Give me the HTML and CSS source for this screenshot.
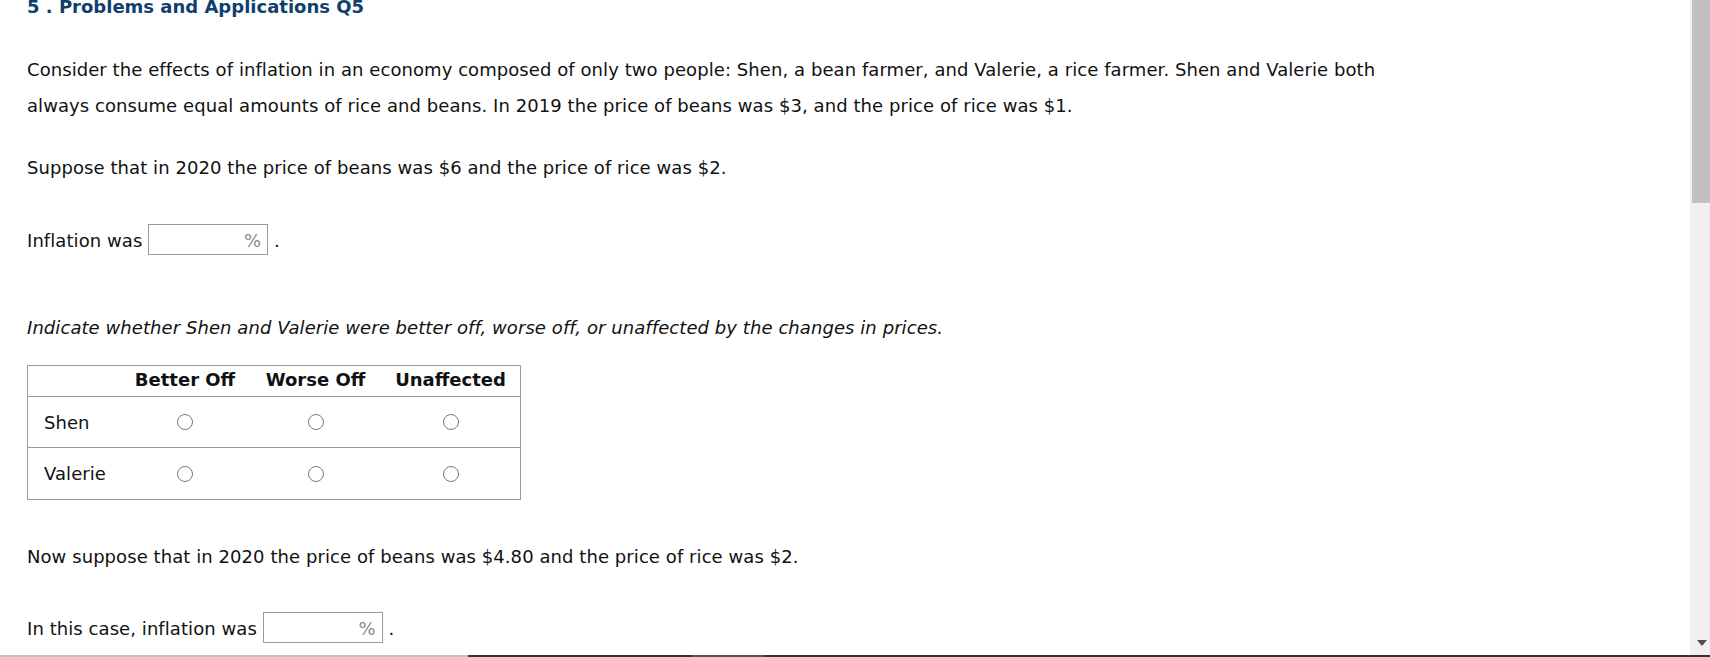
FILE: index.html
```html
<!DOCTYPE html>
<html lang="en">
<head>
<meta charset="utf-8">
<title>Problems and Applications Q5</title>
<link rel="stylesheet" href="styles.css">
</head>
<body>
<div class="frame">
  <div class="viewport">
    <main class="content">
      <h2 class="title">5 . Problems and Applications Q5</h2>
      <p class="para">Consider the effects of inflation in an economy composed of only two people: Shen, a bean farmer, and Valerie, a rice farmer. Shen and Valerie both always consume equal amounts of rice and beans. In 2019 the price of beans was $3, and the price of rice was $1.</p>
      <p class="para gap-a">Suppose that in 2020 the price of beans was $6 and the price of rice was $2.</p>
      <p class="para gap-b">Inflation was <span class="answer"><input class="answer-field" type="text" aria-label="Inflation"><span class="unit">%</span></span> .</p>
      <p class="para gap-c"><em>Indicate whether Shen and Valerie were better off, worse off, or unaffected by the changes in prices.</em></p>
      <div class="grid">
        <div class="row head">
          <div class="cell label"></div>
          <div class="cell c1">Better Off</div>
          <div class="cell c2">Worse Off</div>
          <div class="cell c3">Unaffected</div>
        </div>
        <div class="row body-row">
          <div class="cell label">Shen</div>
          <div class="cell c1"><input class="radio" type="radio" name="shen" aria-label="Shen better off"></div>
          <div class="cell c2"><input class="radio" type="radio" name="shen" aria-label="Shen worse off"></div>
          <div class="cell c3"><input class="radio" type="radio" name="shen" aria-label="Shen unaffected"></div>
        </div>
        <div class="row body-row last">
          <div class="cell label">Valerie</div>
          <div class="cell c1"><input class="radio" type="radio" name="valerie" aria-label="Valerie better off"></div>
          <div class="cell c2"><input class="radio" type="radio" name="valerie" aria-label="Valerie worse off"></div>
          <div class="cell c3"><input class="radio" type="radio" name="valerie" aria-label="Valerie unaffected"></div>
        </div>
      </div>
      <p class="para gap-d">Now suppose that in 2020 the price of beans was $4.80 and the price of rice was $2.</p>
      <p class="para gap-e">In this case, inflation was <span class="answer"><input class="answer-field" type="text" aria-label="Inflation in this case"><span class="unit">%</span></span> .</p>
    </main>
  </div>
  <div class="vscroll">
    <div class="thumb"></div>
    <svg class="arrow" width="10" height="6" viewBox="0 0 10 6"><polygon points="0,0 10,0 5,6" fill="#505050"/></svg>
  </div>
</div>
<div class="hbar">
  <div class="seg seg-light"></div>
  <div class="seg seg-dark1"></div>
  <div class="seg seg-mid"></div>
  <div class="seg seg-dark2"></div>
</div>
</body>
</html>
```

FILE: styles.css
```css
html, body {
  margin: 0;
  padding: 0;
  background: #fff;
  overflow: hidden;
}
body {
  width: 1710px;
  height: 657px;
  font-family: "DejaVu Sans", Verdana, sans-serif;
  font-size: 18px;
  letter-spacing: 0.07px;
  color: #111;
}
.frame {
  display: flex;
  height: 655px;
}
.viewport {
  flex: 1;
  overflow: hidden;
  background: #fff;
}
.content {
  padding-left: 27px;
}
.title {
  margin: -4px 0 0;
  font-size: 18px;
  line-height: 22px;
  font-weight: bold;
  letter-spacing: 0;
  color: #0f3f6e;
}
.para {
  margin: 34px 0 0;
  line-height: 36px;
  max-width: 1350px;
}
.gap-a { margin-top: 26px; }
.gap-b { margin-top: 37px; }
.gap-c { margin-top: 51px; }
.gap-d { margin-top: 39px; }
.gap-e { margin-top: 36px; }

.answer {
  display: inline-flex;
  box-sizing: border-box;
  width: 120px;
  height: 31px;
  border: 1px solid #9a9a9a;
  padding: 5px 6px 0 0;
  align-items: flex-start;
  vertical-align: baseline;
  line-height: normal;
  background: #fff;
}
.answer-field {
  flex: 1;
  min-width: 0;
  border: 0;
  padding: 0;
  margin: 0;
  font: inherit;
  background: transparent;
  outline: none;
  height: 21px;
}
.unit {
  color: #8a8a8a;
}

.grid {
  margin-top: 19px;
  width: 494px;
  box-sizing: border-box;
  border: 1px solid #9a9a9a;
}
.row {
  display: flex;
  align-items: center;
}
.head {
  height: 27px;
  padding-bottom: 3px;
  border-bottom: 1px solid #9a9a9a;
  font-weight: bold;
  letter-spacing: 0;
}
.body-row {
  height: 50px;
  border-bottom: 1px solid #9a9a9a;
}
.body-row.last {
  height: 51px;
  border-bottom: 0;
}
.cell {
  display: flex;
  align-items: center;
  justify-content: center;
}
.label {
  width: 92px;
  justify-content: flex-start;
  padding-left: 16px;
  box-sizing: border-box;
}
.c1 { width: 130px; }
.c2 { width: 131px; }
.c3 { width: 139px; }
.radio {
  appearance: none;
  -webkit-appearance: none;
  margin: 0;
  width: 16px;
  height: 16px;
  border: 1px solid #7a7a7a;
  border-radius: 50%;
  background: #fff;
  box-sizing: border-box;
}

.vscroll {
  width: 20px;
  background: #f0f0f0;
  display: flex;
  flex-direction: column;
  align-items: flex-end;
}
.thumb {
  width: 18px;
  height: 203px;
  background: #c1c1c1;
}
.arrow {
  margin-top: auto;
  margin-bottom: 9px;
  margin-right: 3px;
  display: block;
}
.hbar {
  display: flex;
  height: 2px;
}
.seg { height: 2px; }
.seg-light { width: 468px; background: #c1c1c1; }
.seg-dark1 { width: 224px; background: #333; }
.seg-mid { width: 73px; background: #555; }
.seg-dark2 { flex: 1; background: #333; }
```
